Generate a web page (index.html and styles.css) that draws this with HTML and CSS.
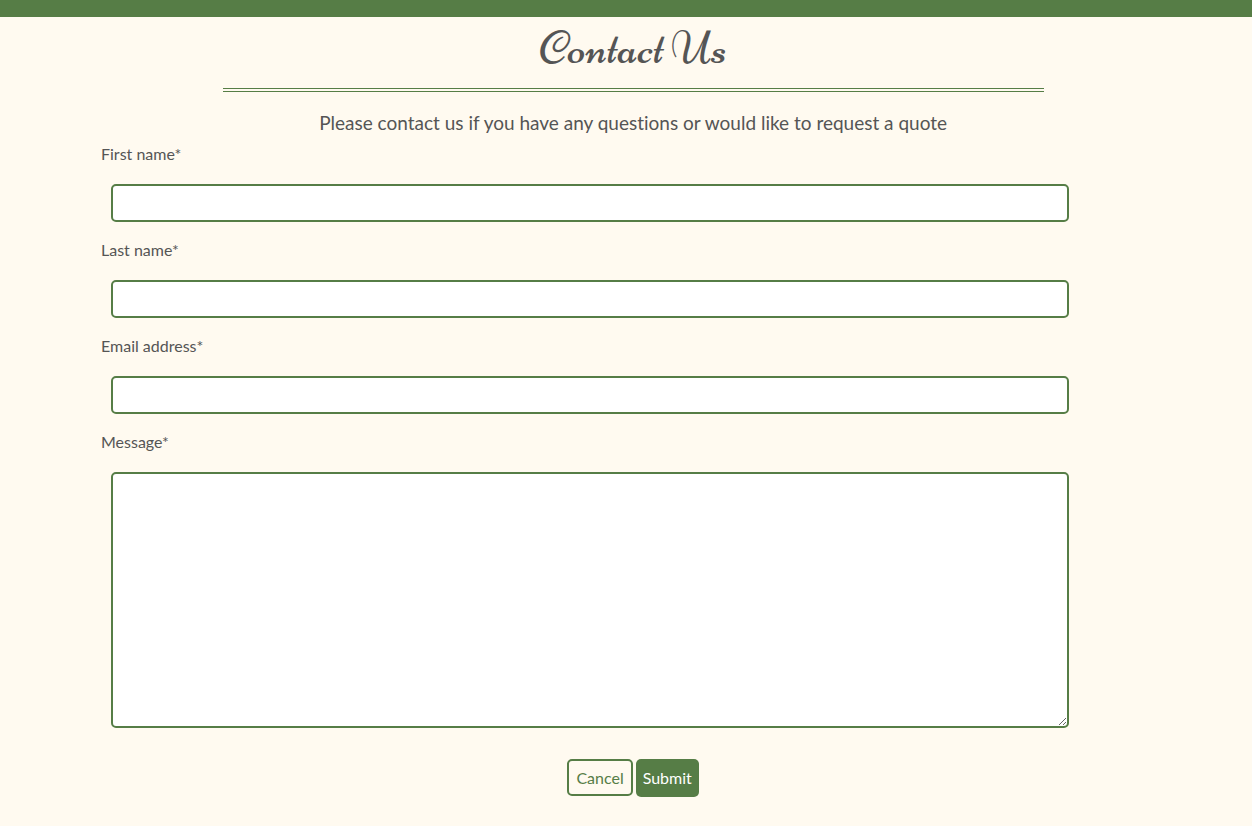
FILE: index.html
```html
<!DOCTYPE html>
<html lang="en">
<head>
<meta charset="utf-8">
<meta name="viewport" content="width=device-width, initial-scale=1">
<title>Contact Us</title>
<link rel="stylesheet" href="styles.css">
</head>
<body>
<header class="top-bar"></header>
<main class="contact">
  <h1 class="contact-title">Contact Us</h1>
  <hr class="divider">
  <p class="intro">Please contact us if you have any questions or would like to request a quote</p>
  <form class="contact-form">
    <label class="field-label" for="first-name">First name*</label>
    <input class="field" id="first-name" type="text" name="first_name" required>
    <label class="field-label" for="last-name">Last name*</label>
    <input class="field" id="last-name" type="text" name="last_name" required>
    <label class="field-label" for="email">Email address*</label>
    <input class="field" id="email" type="email" name="email" required>
    <label class="field-label" for="message">Message*</label>
    <textarea class="field field-message" id="message" name="message" required></textarea>
    <div class="actions">
      <button class="button button-cancel" type="reset">Cancel</button>
      <button class="button button-submit" type="submit">Submit</button>
    </div>
  </form>
</main>
</body>
</html>
```
FILE: styles.css
```css
* {
  box-sizing: border-box;
}

body {
  margin: 0;
  background: #fffaf0;
  color: #555;
  font-family: Lato, sans-serif;
  font-size: 16px;
  font-variant-ligatures: none;
  line-height: 24px;
}

.top-bar {
  height: 17px;
  background: #567d46;
}

.contact {
  width: 85%;
  margin-left: 101px;
}

.contact-title {
  margin: 0;
  font-family: Niconne, Playball, cursive;
  font-size: 48px;
  font-weight: 400;
  line-height: 63px;
  text-align: center;
}

.divider {
  height: 4px;
  margin: 8px 121px 20px 122px;
  border: solid #567d46;
  border-width: 1px 0;
}

.intro {
  margin: 0 0 8px;
  font-size: 19px;
  line-height: 22px;
  text-align: center;
}

.contact-form {
  display: flex;
  flex-direction: column;
}

.field-label {
  margin-bottom: 18px;
}

.field {
  width: 90%;
  height: 38px;
  margin: 0 0 16px 10px;
  padding: 6px;
  border: 2px solid #567d46;
  border-radius: 5px;
  background: #fff;
  color: #555;
  font: inherit;
}

.field-message {
  height: 256px;
  margin-bottom: 31px;
  resize: both;
}

.actions {
  display: flex;
  justify-content: center;
  align-items: flex-start;
  gap: 3px;
  padding-bottom: 24px;
}

.button {
  border-radius: 5px;
  font: inherit;
  cursor: pointer;
}

.button-cancel {
  height: 37px;
  padding: 0 7px;
  border: 2px solid #567d46;
  background: transparent;
  color: #567d46;
}

.button-submit {
  height: 38px;
  padding: 0 7px;
  border: 0;
  background: #567d46;
  color: #fff;
}
```
